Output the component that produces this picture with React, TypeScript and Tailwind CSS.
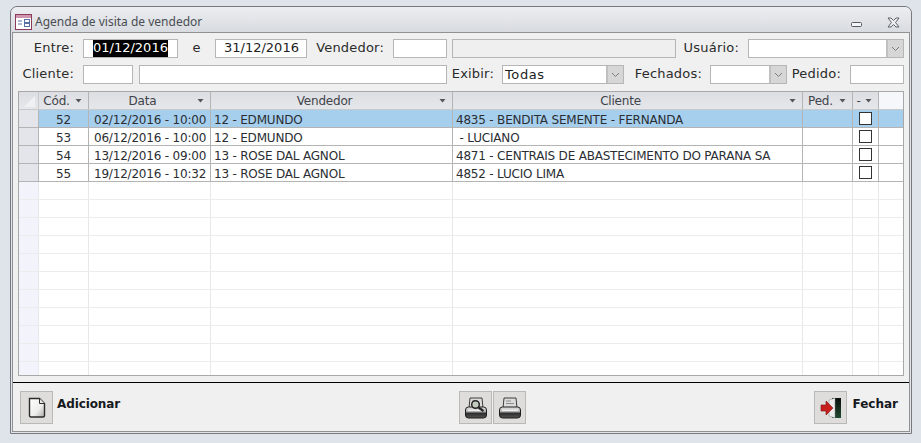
const font = "font-['DejaVu_Sans',sans-serif]";

function Box({ w, text, selected, dis, cls = "" }: { w: string; text?: string; selected?: boolean; dis?: boolean; cls?: string }) {
  return (
    <div className={`${w} ${cls} shrink-0 h-[19px] border border-[#b6b6b6] ${dis ? "bg-[#efefef]" : "bg-white"} text-[13px] leading-[16px] text-[#1d1d1d] overflow-hidden whitespace-nowrap`}>
      {selected ? <span className="ml-[9px] inline-block bg-black text-white h-[17px] w-[75px]">{text}</span> : null}
      {!selected && text ? <span className="ml-[8px]">{text}</span> : null}
    </div>
  );
}

function Combo({ w, text, cls = "" }: { w: string; text?: string; cls?: string }) {
  return (
    <div className={`${w} ${cls} shrink-0 h-[19px] border border-[#b6b6b6] bg-white flex text-[13px] leading-[17px] tracking-[0.6px] text-[#1d1d1d]`}>
      <span className="flex-1 pl-[2px] whitespace-nowrap">{text}</span>
      <span className="w-[17px] h-full bg-[#d6d6d6] border-l-2 border-[#c0c0c0] flex items-center justify-center">
        <svg width="9" height="6" viewBox="0 0 9 6" fill="none"><path d="M1 1l3.500 3.500L8 1" stroke="#7c7c7c" strokeWidth="1" /></svg>
      </span>
    </div>
  );
}

function Label({ w, text, cls = "" }: { w: string; text: string; cls?: string }) {
  return <div className={`${w} ${cls} shrink-0 text-[13px] leading-[18px] tracking-[0.2px] text-[#2b2b2b] whitespace-nowrap`}>{text}</div>;
}

function Caret() {
  return (
    <svg width="7" height="4" viewBox="0 0 7 4" className="shrink-0"><path d="M0.500 0h6L3.500 3.500z" fill="#555" /></svg>
  );
}

const rows = [
  { c: "52", d: "02/12/2016 - 10:00", v: "12 - EDMUNDO", k: "4835 - BENDITA SEMENTE - FERNANDA" },
  { c: "53", d: "06/12/2016 - 10:00", v: "12 - EDMUNDO", k: " - LUCIANO" },
  { c: "54", d: "13/12/2016 - 09:00", v: "13 - ROSE DAL AGNOL", k: "4871 - CENTRAIS DE ABASTECIMENTO DO PARANA SA" },
  { c: "55", d: "19/12/2016 - 10:32", v: "13 - ROSE DAL AGNOL", k: "4852 - LUCIO LIMA" },
];

function HeadCell({ w, text, cls = "" }: { w: string; text: string; cls?: string }) {
  return (
    <div className={`${w} ${cls} h-full shrink-0 border-r border-[#b4b4b4] flex items-center pr-[6px] pl-[3px]`}>
      <span className="flex-1 text-center pt-[1px] pr-[4px]">{text}</span>
      <Caret />
    </div>
  );
}

function Row({ r, active }: { r: (typeof rows)[number]; active: boolean }) {
  const line = "border-r border-[#b4b4b4] h-full shrink-0";
  return (
    <div className={`h-[18px] flex border-b border-[#b4b4b4] ${active ? "bg-[#a6cfee]" : ""}`}>
      <div className="w-[20px] h-full shrink-0 bg-[#e3e5ea] border-r border-[#b4b4b4]" />
      <div className={`${line} w-[50px] text-center`}>{r.c}</div>
      <div className={`${line} w-[122px] pl-[5px]`}>{r.d}</div>
      <div className={`${line} w-[242px] pl-[3px]`}>{r.v}</div>
      <div className={`${line} w-[350px] pl-[3px] whitespace-pre`}>{r.k}</div>
      <div className={`${line} w-[50px]`} />
      <div className={`${line} w-[26px] flex items-center justify-center`}>
        <div className="w-[13px] h-[13px] border border-[#333] bg-white" />
      </div>
    </div>
  );
}

function EmptyRow() {
  const line = "border-r border-[#e8e8e8] h-full shrink-0";
  return (
    <div className="h-[18px] flex border-b border-[#ececec]">
      <div className="w-[20px] h-full shrink-0 bg-[#f3f4fb] border-r border-[#e8e8e8]" />
      <div className={`${line} w-[50px]`} />
      <div className={`${line} w-[122px]`} />
      <div className={`${line} w-[242px]`} />
      <div className={`${line} w-[350px]`} />
      <div className={`${line} w-[50px]`} />
      <div className={`${line} w-[26px]`} />
    </div>
  );
}

function Btn({ children, cls = "" }: { children: React.ReactNode; cls?: string }) {
  return (
    <div className={`${cls} w-[33px] h-[33px] shrink-0 bg-[#dedddb] border border-[#b9b9b7] flex items-center justify-center`}>{children}</div>
  );
}

function Printer({ glass, id }: { glass?: boolean; id: string }) {
  return (
    <svg width="24" height="22" viewBox="0 0 24 22">
      <defs>
        <linearGradient id={id} x1="0" y1="0" x2="0" y2="1">
          <stop offset="0" stopColor="#e8e8e8" />
          <stop offset="0.45" stopColor="#a8a8a8" />
          <stop offset="0.55" stopColor="#2c2c2c" />
          <stop offset="1" stopColor="#555" />
        </linearGradient>
      </defs>
      <path d="M6 1h12l1 10H5z" fill="#dcdcdc" stroke="#3c3c3c" strokeWidth="1" />
      <path d="M8 4h5M8 6.500h8" stroke="#8a8a8a" strokeWidth="1" />
      <path d="M1.500 13q0-3 3-3h15q3 0 3 3v5q0 3-3 3h-15q-3 0-3-3z" fill={`url(#${id})`} stroke="#1d1d1d" strokeWidth="1" />
      <rect x="4" y="12.500" width="16" height="1.500" fill="#f0f0f0" />
      {glass ? <circle cx="11.500" cy="7.500" r="3.800" fill="#c2ccbf" stroke="#262626" strokeWidth="1.500" /> : null}
      {glass ? <path d="M14.500 10.500l5 3.500" stroke="#262626" strokeWidth="2.200" /> : null}
    </svg>
  );
}

export default function App() {
  return (
    <div className={`w-[921px] h-[443px] bg-[#dfe3ea] pl-[10px] pt-[6px] overflow-hidden ${font}`}>
      <div className="w-[902px] h-[428px] border border-[#77797c] rounded-t-[7px] bg-[#e2e4e9] flex flex-col">
        {/* title bar */}
        <div className="h-[25px] shrink-0 flex items-center pt-[4px] pl-[4px] pr-[11px] bg-gradient-to-b from-[#eceef1] to-[#d8dbe0] rounded-t-[7px]">
          <svg width="17" height="16" viewBox="0 0 17 16" className="shrink-0">
            <rect x="0.500" y="0.500" width="16" height="15" fill="#fff" stroke="#8c3a5c" />
            <rect x="1" y="1" width="15" height="3" fill="#cf97ae" />
            <path d="M3 7h4M3 10h4" stroke="#5a6fa8" />
            <rect x="9.500" y="5.500" width="5" height="3" fill="none" stroke="#5a6fa8" />
            <rect x="9.500" y="9.500" width="5" height="3" fill="none" stroke="#5a6fa8" />
          </svg>
          <span className="ml-[3px] font-['Noto_Sans',sans-serif] text-[12px] text-[#4a4d52] flex-1 whitespace-nowrap">Agenda de visita de vendedor</span>
          <svg width="12" height="7" viewBox="0 0 12 7" className="mt-[5px]"><rect x="0.500" y="1.500" width="10" height="4" rx="1" fill="#f4f5f7" stroke="#555a61" /></svg>
          <svg width="13" height="11" viewBox="0 0 13 11" className="ml-[24px] mt-[1px]">
            <path d="M1 1h3l2.500 2.500L9 1h3L8.500 5.500 12 10H9L6.500 7.500 4 10H1l3.500-4.500z" fill="#eef0f3" stroke="#5d6268" strokeWidth="1" />
          </svg>
        </div>
        {/* body */}
        <div className="flex-1 mx-[1px] mb-[1px] border border-[#8f9194] bg-[#f0f0f0] flex flex-col">
          <div className="h-[349px] shrink-0 pt-[6px] pl-[5px]">
            <div className="flex h-[19px]">
              <Label w="w-[56px]" text="Entre:" cls="text-right" />
              <Box w="w-[95px]" cls="ml-[9px]" text="01/12/2016" selected />
              <Label w="w-[37px]" text="e" cls="text-center" />
              <Box w="w-[92px]" text="31/12/2016" />
              <Label w="w-[77px]" text="Vendedor:" cls="text-right" />
              <Box w="w-[54px]" cls="ml-[9px]" />
              <Box w="w-[224px]" cls="ml-[5px]" dis />
              <Label w="w-[63px]" text="Usuário:" cls="text-right" />
              <Combo w="w-[156px]" cls="ml-[9px]" />
            </div>
            <div className="flex h-[19px] mt-[7px]">
              <Label w="w-[56px]" text="Cliente:" cls="text-right" />
              <Box w="w-[50px]" cls="ml-[9px]" />
              <Box w="w-[308px]" cls="ml-[6px]" />
              <Label w="w-[47px]" text="Exibir:" cls="text-right" />
              <Combo w="w-[122px]" cls="ml-[8px]" text="Todas" />
              <Label w="w-[78px]" text="Fechados:" cls="text-right" />
              <Combo w="w-[77px]" cls="ml-[8px]" />
              <Label w="w-[54px]" text="Pedido:" cls="text-right" />
              <Box w="w-[54px]" cls="ml-[9px]" />
            </div>
            <div className="mt-[7px] w-[886px] h-[285px] border border-[#a8a8a8] bg-white overflow-hidden text-[12px] leading-[20px] tracking-[-0.2px] text-[#2a2e33] whitespace-nowrap">
              <div className="h-[18px] flex bg-gradient-to-b from-[#dcdee3] to-[#e6e7ea] border-b border-[#c8c9cc] text-[#3f434a]">
                <div className="w-[20px] h-full shrink-0 border-r border-[#c8c9cc] relative">
                  <svg width="12" height="12" viewBox="0 0 12 12" className="absolute left-[5px] top-[4px]"><path d="M11 0v11H0z" fill="#f0f1f3" /></svg>
                </div>
                <HeadCell w="w-[50px]" text="Cód." />
                <HeadCell w="w-[122px]" text="Data" />
                <HeadCell w="w-[242px]" text="Vendedor" />
                <HeadCell w="w-[350px]" text="Cliente" />
                <HeadCell w="w-[50px]" text="Ped." />
                <HeadCell w="w-[26px]" text="-" />
                <div className="flex-1 h-full bg-[#f6f7fb]" />
              </div>
              {rows.map((r, i) => (
                <Row key={r.c} r={r} active={i === 0} />
              ))}
              {Array.from({ length: 11 }).map((_, i) => (
                <EmptyRow key={i} />
              ))}
            </div>
          </div>
          <div className="flex-1 border-t border-black flex items-start pt-[8px] pl-[7px] pr-[11px] text-[12px] font-bold text-[#16191d]">
            <Btn>
              <svg width="18" height="21" viewBox="0 0 18 21">
                <defs>
                  <linearGradient id="pg" x1="0" y1="0" x2="1" y2="1"><stop offset="0" stopColor="#fff" /><stop offset="0.6" stopColor="#eeeeec" /><stop offset="1" stopColor="#a9a9a7" /></linearGradient>
                </defs>
                <path d="M1.500 1.500h10l5 5v12q0 1.500-1.500 1.500H3q-1.500 0-1.500-1.500z" fill="url(#pg)" stroke="#2d2d2d" strokeWidth="1.400" />
                <path d="M11.500 1.500v5h5" fill="#e8e8e8" stroke="#2d2d2d" strokeWidth="1" />
              </svg>
            </Btn>
            <span className="ml-[4px] mt-[6px] leading-[14px] tracking-[-0.1px]">Adicionar</span>
            <div className="flex-1 flex justify-center gap-[1px] pl-[51px]">
              <Btn><Printer glass id="pa" /></Btn>
              <Btn><Printer id="pb" /></Btn>
            </div>
            <Btn>
              <svg width="22" height="22" viewBox="0 0 22 22">
                <defs>
                  <linearGradient id="dg" x1="0" y1="0" x2="0" y2="1"><stop offset="0" stopColor="#0a0f0c" /><stop offset="1" stopColor="#1f4a30" /></linearGradient>
                </defs>
                <rect x="12" y="1" width="9" height="20" fill="url(#dg)" />
                <path d="M9 3l6-2v20l-6-2z" fill="#ececec" stroke="#888" strokeWidth="0.500" />
                <path d="M1 8h5V4l7 7-7 7v-4H1z" fill="#c8201c" stroke="#7a1210" strokeWidth="0.600" />
              </svg>
            </Btn>
            <span className="ml-[5px] mt-[6px] leading-[14px]">Fechar</span>
          </div>
        </div>
      </div>
    </div>
  );
}
